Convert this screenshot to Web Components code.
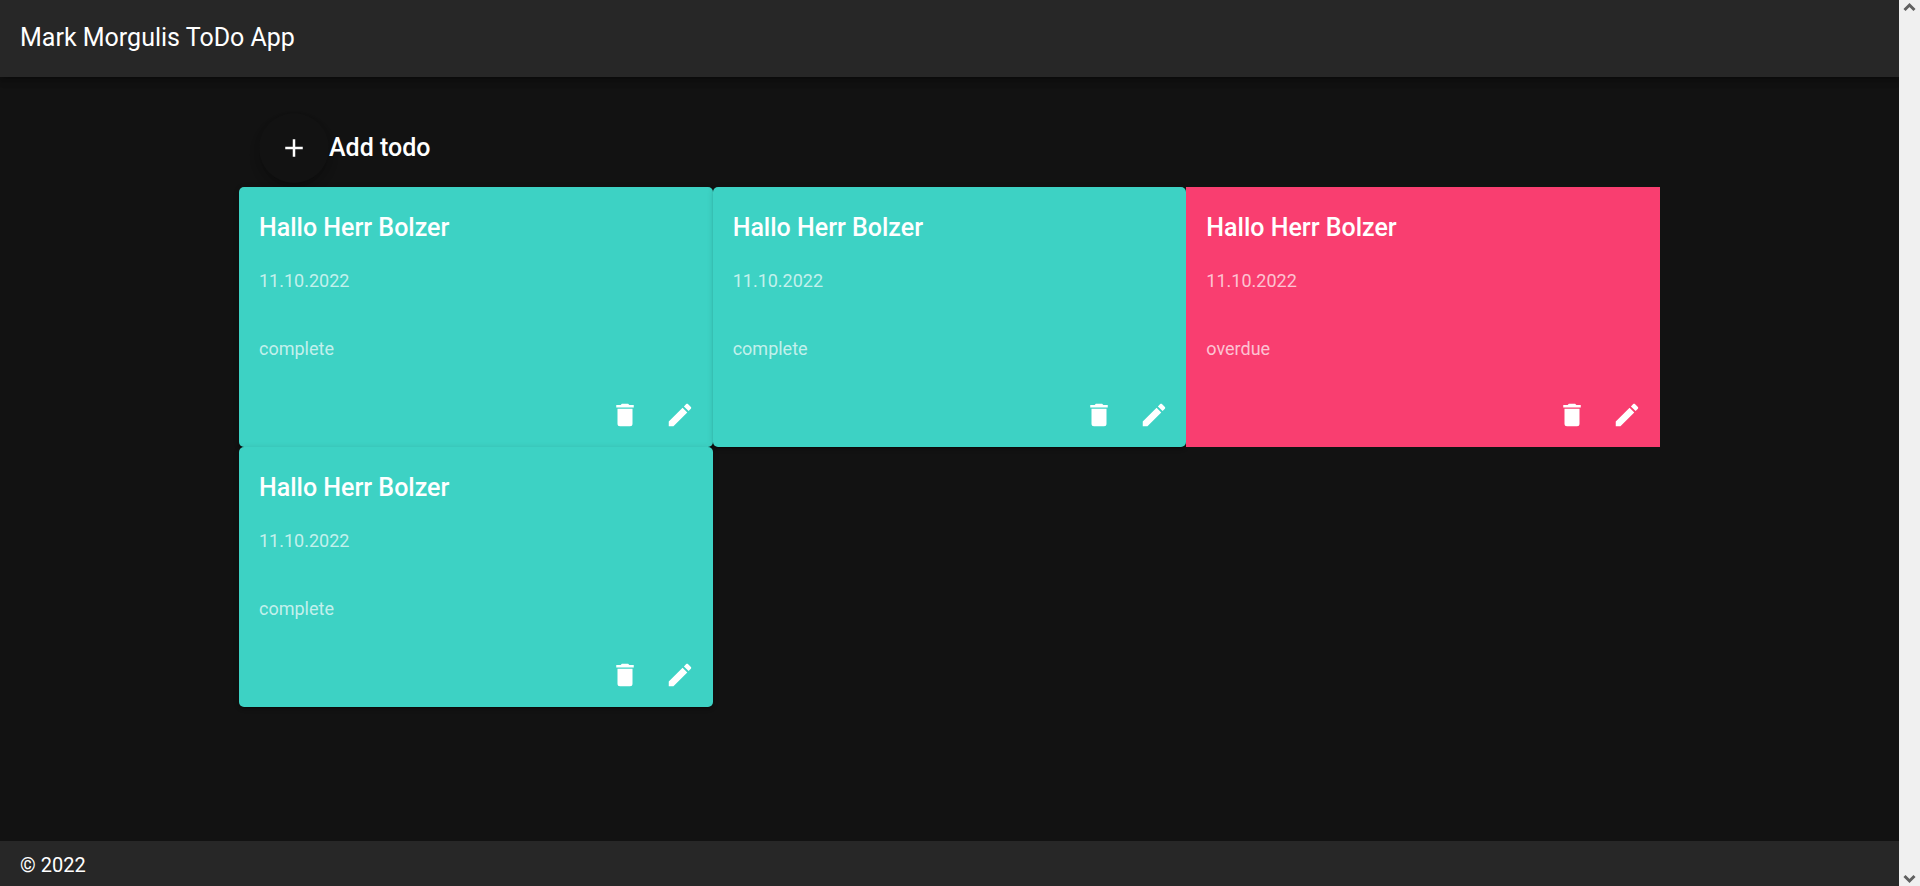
<!DOCTYPE html>
<html lang="en">
<head>
<meta charset="utf-8">
<meta name="viewport" content="width=device-width, initial-scale=1">
<title>Mark Morgulis ToDo App</title>
<style>
  html, body { margin: 0; }
  body { background: #121212; color: #fff; font-family: Roboto, sans-serif; font-size: 20px; line-height: 30px; }
</style>
</head>
<body>
<todo-app></todo-app>
<script>
const ICONS = {
  plus: "M19,13H13V19H11V13H5V11H11V5H13V11H19V13Z",
  delete: "M19,4H15.5L14.5,3H9.5L8.5,4H5V6H19M6,19A2,2 0 0,0 8,21H16A2,2 0 0,0 18,19V7H6V19Z",
  pencil: "M20.71,7.04C21.1,6.65 21.1,6 20.71,5.63L18.37,3.29C18,2.9 17.35,2.9 16.96,3.29L15.12,5.12L18.87,8.87M3,17.25V21H6.75L17.81,9.93L14.06,6.18L3,17.25Z"
};

function define(name, render) {
  customElements.define(name, class extends HTMLElement {
    connectedCallback() {
      if (!this.shadowRoot) this.attachShadow({ mode: "open" }).innerHTML = render(this);
    }
  });
}

// Round button holding one icon; the "raised" attribute makes it a floating action button.
define("icon-button", el => `
  <style>
    :host { display: block; }
    button { display: grid; place-items: center; width: 45px; height: 45px; padding: 0; border: 0;
      border-radius: 50%; background: none; color: inherit; cursor: pointer; }
    :host([raised]) button { width: 70px; height: 70px; background: #121212;
      box-shadow: 0 4px 6px -1px rgba(0,0,0,.2), 0 7px 12px rgba(0,0,0,.1); }
    svg { width: 30px; height: 30px; fill: currentColor; }
  </style>
  <button type="button" aria-label="${el.getAttribute("label")}">
    <svg viewBox="0 0 24 24" aria-hidden="true"><path d="${ICONS[el.getAttribute("icon")]}"/></svg>
  </button>`);

define("app-header", () => `
  <style>
    :host { display: block; position: relative; background: #272727;
      box-shadow: 0 2px 5px -1px rgba(0,0,0,.2), 0 5px 6px rgba(0,0,0,.14), 0 1px 12px rgba(0,0,0,.12); }
    header { padding: 19px 20px 20px; }
    h1 { margin: 0; font-size: 25px; font-weight: 400; line-height: 38px; }
  </style>
  <header><h1><slot></slot></h1></header>`);

define("app-footer", () => `
  <style>
    :host { display: block; background: #272727; }
    footer { padding: 9px 20px 6px; }
  </style>
  <footer><slot></slot></footer>`);

define("add-todo", () => `
  <style>
    :host { display: flex; align-items: center; padding: 6px 20px 4px; }
    h2 { margin: 0; font-size: 25px; font-weight: 500; line-height: 40px; }
  </style>
  <icon-button raised icon="plus" label="Add todo"></icon-button>
  <h2><slot></slot></h2>`);

define("todo-card", () => `
  <style>
    :host { display: block; border-radius: 5px; background: #3dd2c4;
      box-shadow: 0 3px 1px -2px rgba(0,0,0,.2), 0 2px 2px rgba(0,0,0,.14), 0 1px 6px rgba(0,0,0,.12); }
    :host([status="overdue"]) { border-radius: 0; background: #f93e70; box-shadow: none; }
    article { display: flex; flex-direction: column; height: 100%; }
    h3 { margin: 0; padding: 21px 20px 8px; font-size: 25px; font-weight: 500; line-height: 40px; }
    p { margin: 0; padding: 11px 20px 29px; font-size: 18px; line-height: 28px; color: rgba(255,255,255,.7); }
    .actions { display: flex; justify-content: flex-end; gap: 10px; padding: 0 10px 10px; }
  </style>
  <article>
    <h3><slot name="title"></slot></h3>
    <p><slot name="date"></slot></p>
    <p><slot name="state"></slot></p>
    <div class="actions">
      <icon-button icon="delete" label="Delete"></icon-button>
      <icon-button icon="pencil" label="Edit"></icon-button>
    </div>
  </article>`);

define("scroll-rail", () => `
  <style>
    :host { display: flex; flex-direction: column; justify-content: space-between; align-items: center;
      box-sizing: border-box; padding: 1px 0; background: #f0f0f0; }
    svg { width: 13px; height: 13px; fill: none; stroke: #606060; stroke-width: 3; }
  </style>
  <svg viewBox="0 0 13 13" aria-hidden="true"><path d="M1.5 9L6.5 4L11.5 9"/></svg>
  <svg viewBox="0 0 13 13" aria-hidden="true"><path d="M1.5 4L6.5 9L11.5 4"/></svg>`);

const todos = ["complete", "complete", "overdue", "complete"];

define("todo-app", () => `
  <style>
    :host { display: grid; grid-template-columns: 1fr 21px; min-height: 100vh; }
    .page { display: flex; flex-direction: column; overflow: clip; }
    main { flex: 1; box-sizing: border-box; width: 100%; max-width: 1481px; margin: 0 auto; padding: 30px; }
    .cards { display: grid; grid-template-columns: repeat(3, 1fr); }
  </style>
  <div class="page">
    <app-header>Mark Morgulis ToDo App</app-header>
    <main>
      <add-todo>Add todo</add-todo>
      <div class="cards">
        ${todos.map(state => `
        <todo-card status="${state}">
          <span slot="title">Hallo Herr Bolzer</span>
          <time slot="date" datetime="2022-10-11">11.10.2022</time>
          <span slot="state">${state}</span>
        </todo-card>`).join("")}
      </div>
    </main>
    <app-footer>© 2022</app-footer>
  </div>
  <scroll-rail></scroll-rail>`);
</script>
</body>
</html>
